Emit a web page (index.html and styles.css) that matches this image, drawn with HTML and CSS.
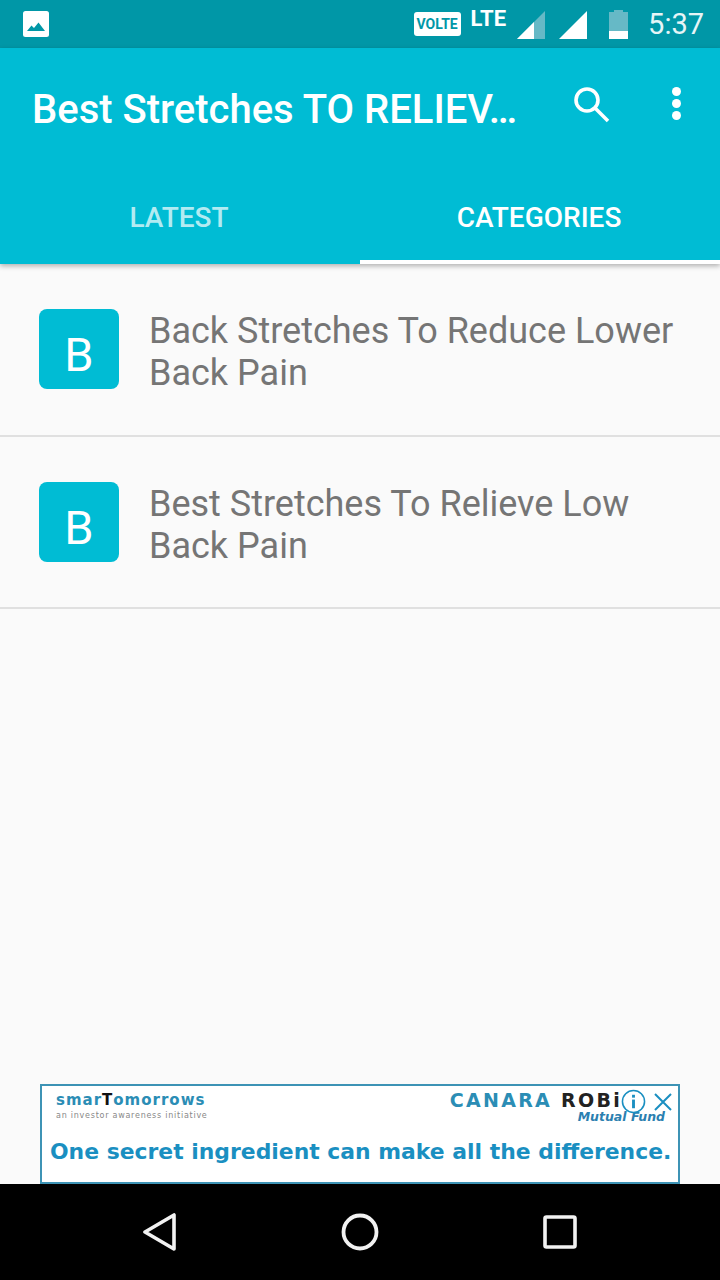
FILE: index.html
```html
<!DOCTYPE html>
<html lang="en">
<head>
    <meta charset="UTF-8">
    <meta name="viewport" content="width=device-width, initial-scale=1.0">
    <title>Best Stretches</title>
    <link rel="stylesheet" href="styles.css">
</head>
<body>
<div class="screen">
    <div class="status-bar">
        <svg class="status-pic" width="26" height="26" viewBox="0 0 26 26">
            <rect width="26" height="26" rx="2.5" fill="#fff"/>
            <path d="M4 20 L8.5 14.5 L11 17 L15.5 11.5 L22 20 Z" fill="#0097a7"/>
        </svg>
        <div class="status-right">
            <span class="volte">VOLTE</span>
            <span class="lte">LTE</span>
            <svg class="signal-one" width="29" height="29" viewBox="0 0 29 29">
                <path d="M0 28 L28 0 V28 Z" fill="#66b9c6"/>
                <path d="M0 28 L17 11 V28 Z" fill="#fff"/>
            </svg>
            <svg class="signal-two" width="29" height="29" viewBox="0 0 29 29">
                <path d="M0 28 L28 0 V28 Z" fill="#fff"/>
            </svg>
            <svg class="battery" width="19" height="30" viewBox="0 0 19 30">
                <path d="M5 0 H14 V2 H19 V29 H0 V2 H5 Z" fill="#66b9c6"/>
                <rect y="21" width="19" height="8" fill="#fff"/>
            </svg>
            <span class="clock">5:37</span>
        </div>
    </div>

    <div class="app-bar">
        <div class="toolbar">
            <span class="app-title">Best Stretches TO RELIEV…</span>
            <svg class="search-icon" width="38" height="38" viewBox="0 0 38 38" fill="none" stroke="#fff" stroke-width="3.6">
                <circle cx="14" cy="14" r="11"/>
                <path d="M22 22 L35 35"/>
            </svg>
            <div class="more-icon">
                <span></span><span></span><span></span>
            </div>
        </div>
        <div class="tabs">
            <div class="tab">LATEST</div>
            <div class="tab active">CATEGORIES</div>
        </div>
    </div>

    <div class="list">
        <div class="list-item">
            <div class="letter">B</div>
            <div class="item-text">Back Stretches To Reduce Lower Back Pain</div>
        </div>
        <div class="list-item">
            <div class="letter">B</div>
            <div class="item-text">Best Stretches To Relieve Low Back Pain</div>
        </div>
    </div>

    <div class="ad">
        <div class="ad-top">
            <div class="ad-brand">
                <div class="brand-name">smar<b>T</b>omorrows</div>
                <div class="brand-sub">an investor awareness initiative</div>
            </div>
            <div class="ad-sponsor">
                <div class="sponsor-name">CANARA <b>ROBi</b></div>
                <div class="sponsor-sub">Mutual Fund</div>
            </div>
            <div class="ad-controls">
                <svg width="25" height="25" viewBox="0 0 26 26" fill="none" stroke="#1a8fc1" stroke-width="1.6">
                    <circle cx="13" cy="13" r="11.5"/>
                    <path d="M13 11 V20" stroke-width="3"/>
                    <path d="M13 6 V9" stroke-width="3"/>
                </svg>
                <svg width="20" height="20" viewBox="0 0 20 20" fill="none" stroke="#1a8fc1" stroke-width="2">
                    <path d="M2 2 L18 18 M18 2 L2 18"/>
                </svg>
            </div>
        </div>
        <div class="ad-line">One secret ingredient can make all the difference.</div>
    </div>

    <div class="nav-bar">
        <svg width="34" height="38" viewBox="0 0 34 38" fill="none" stroke="#f2f2f2" stroke-width="3.6" stroke-linejoin="round">
            <path d="M31 2 V36 L2 19 Z"/>
        </svg>
        <svg width="38" height="38" viewBox="0 0 38 38" fill="none" stroke="#f2f2f2" stroke-width="3.8">
            <circle cx="19" cy="19" r="16.5"/>
        </svg>
        <svg width="34" height="34" viewBox="0 0 34 34" fill="none" stroke="#f2f2f2" stroke-width="3.6" stroke-linejoin="round">
            <rect x="2" y="2" width="30" height="30" rx="1.5"/>
        </svg>
    </div>
</div>
</body>
</html>
```

FILE: styles.css
```css
body {
    margin: 0;
    font-family: Roboto, sans-serif;
}
.screen {
    width: 720px;
    height: 1280px;
    display: flex;
    flex-direction: column;
    background-color: #fafafa;
    overflow: hidden;
}

/* status bar */
.status-bar {
    height: 48px;
    flex: none;
    display: flex;
    align-items: center;
    justify-content: space-between;
    padding: 0 16px 0 23px;
    background-color: #0097a7;
    color: #fff;
}
.status-right {
    display: flex;
    align-items: center;
}
.volte {
    width: 47px;
    height: 24px;
    margin-right: 2px;
    border-radius: 3px;
    background-color: #fff;
    color: #0097a7;
    font-size: 14px;
    font-weight: 700;
    line-height: 24px;
    text-align: center;
}
.lte {
    margin: -12px 0 0 8px;
    font-size: 22px;
    font-weight: 700;
}
.signal-one {
    margin: 2px 0 0 11px;
}
.signal-two {
    margin: 2px 0 0 13px;
}
.battery {
    margin: 1px 0 0 21px;
}
.clock {
    margin-left: 20px;
    font-size: 29px;
    color: #e6f5f7;
}

/* app bar */
.app-bar {
    height: 216px;
    flex: none;
    background-color: #00bcd4;
    box-shadow: 0 2px 5px rgba(0, 0, 0, 0.3);
    position: relative;
}
.toolbar {
    height: 120px;
    display: flex;
    align-items: center;
    padding-left: 32px;
    box-sizing: border-box;
}
.app-title {
    width: 536px;
    margin-top: 3px;
    color: #fff;
    font-size: 40px;
    font-weight: 500;
    white-space: nowrap;
}
.search-icon {
    margin: -7px 0 0 5px;
}
.more-icon {
    display: flex;
    flex-direction: column;
    gap: 3px;
    margin: -10px 0 0 61px;
}
.more-icon span {
    width: 9px;
    height: 9px;
    border-radius: 50%;
    background-color: #fff;
}
.tabs {
    display: flex;
    height: 96px;
}
.tab {
    width: 360px;
    padding: 33px 2px 0 0;
    box-sizing: border-box;
    text-align: center;
    color: #b2ebf2;
    font-size: 28px;
    font-weight: 500;
}
.tab.active {
    color: #fff;
    border-bottom: 4px solid #fff;
}

/* list */
.list {
    flex: 1;
}
.list-item {
    height: 172px;
    box-sizing: border-box;
    display: flex;
    align-items: center;
    gap: 30px;
    padding: 0 30px 0 39px;
    border-bottom: 2px solid #e0e0e0;
}
.list-item:first-child {
    height: 173px;
    padding-bottom: 1px;
}
.letter {
    width: 80px;
    height: 80px;
    flex: none;
    border-radius: 8px;
    background-color: #00bcd4;
    color: #fff;
    font-size: 47px;
    line-height: 92px;
    text-align: center;
}
.item-text {
    margin-top: 6px;
    color: #757575;
    font-size: 36px;
    line-height: 42px;
}

/* ad banner */
.ad {
    width: 640px;
    height: 100px;
    flex: none;
    margin: 0 auto;
    box-sizing: border-box;
    border: 2px solid #3d93b5;
    background-color: #fff;
    font-family: "DejaVu Sans", sans-serif;
}
.ad-top {
    height: 53px;
    display: flex;
    position: relative;
}
.ad-brand {
    margin: 6px 0 0 14px;
}
.brand-name {
    color: #2b8db5;
    font-size: 15px;
    font-weight: 700;
    letter-spacing: 1px;
    line-height: 17px;
}
.brand-name b {
    color: #111;
}
.brand-sub {
    margin-top: 2px;
    color: #888;
    font-size: 8px;
    letter-spacing: 0.75px;
}
.ad-sponsor {
    margin: 4px 0 0 auto;
    padding-right: 13px;
    text-align: right;
}
.sponsor-name {
    margin-right: 43px;
    color: #2b8db5;
    font-size: 19px;
    font-weight: 700;
    letter-spacing: 2.3px;
    line-height: 20px;
    white-space: nowrap;
}
.sponsor-name b {
    color: #222;
}
.sponsor-sub {
    margin-top: 1px;
    color: #2b7fb0;
    font-size: 12.5px;
    font-style: italic;
    font-weight: 700;
    line-height: 12px;
}
.ad-controls {
    position: absolute;
    top: 3px;
    right: 5px;
    display: flex;
    align-items: center;
    gap: 7px;
}
.ad-line {
    margin-left: 8px;
    color: #1a8fc1;
    font-size: 21.9px;
    font-weight: 700;
    white-space: nowrap;
}

/* nav bar */
.nav-bar {
    height: 96px;
    flex: none;
    display: flex;
    align-items: center;
    background-color: #000;
    justify-content: space-between;
    padding: 0 143px;
}
```
